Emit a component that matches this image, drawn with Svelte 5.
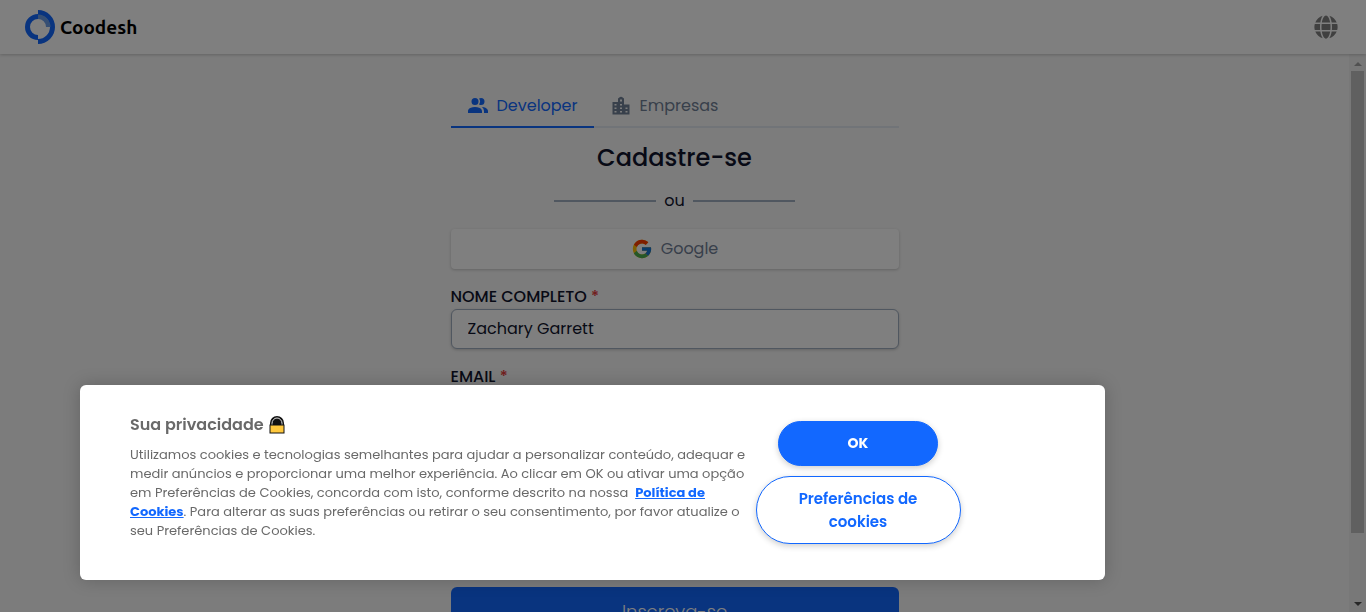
<script>
  let name = $state('Zachary Garrett');
  let email = $state('');
</script>

<div class="page">
  <header>
    <a class="brand" href="/" aria-label="Coodesh">
      <svg width="30" height="34" viewBox="0 0 30 34" aria-hidden="true">
        <path d="M13 4A13 13 0 0 0 13 30V25A8 8 0 0 1 13 9Z" fill="#1268ff" />
        <path d="M13 0A17 17 0 0 1 13 34V29A12 12 0 0 0 13 5Z" fill="#1268ff" />
        <path d="M13 4.500A12.500 12.500 0 0 1 25.500 17H21A8 8 0 0 0 13 9Z" fill="#6c9fe8" />
      </svg>
      <span>Coodesh</span>
    </a>
    <button class="globe" type="button" aria-label="Idioma">
      <svg width="24" height="24" viewBox="0 0 496 512" aria-hidden="true"><path fill="#808080" d="M336.5 160C322 70.7 287.8 8 248 8s-74 62.700-88.500 152h177zM152 256c0 22.200 1.200 43.500 3.300 64h185.300c2.100-20.500 3.300-41.800 3.300-64s-1.200-43.500-3.300-64H155.300c-2.100 20.500-3.300 41.800-3.300 64zm324.700-96c-28.600-67.900-86.500-120.400-158-141.600 24.400 33.800 41.200 84.700 50 141.600h108zM177.200 18.400C105.800 39.600 47.800 92.100 19.300 160h108c8.700-56.900 25.500-107.800 49.900-141.600zM487.400 192H372.700c2.100 21 3.300 42.500 3.300 64s-1.200 43-3.300 64h114.600c5.500-20.500 8.600-41.800 8.600-64s-3.100-43.500-8.500-64zM120 256c0-21.500 1.200-43 3.300-64H8.600C3.200 212.500 0 233.800 0 256s3.200 43.500 8.600 64h114.600c-2-21-3.200-42.500-3.200-64zm39.500 96c14.500 89.300 48.700 152 88.500 152s74-62.700 88.500-152h-177zm159.300 141.600c71.400-21.200 129.400-73.700 158-141.600h-108c-8.800 56.900-25.600 107.800-50 141.600zM19.300 352c28.600 67.900 86.500 120.400 158 141.600-24.400-33.800-41.200-84.700-50-141.600h-108z" /></svg>
    </button>
  </header>

  <div class="body">
    <main>
      <nav class="tabs">
        <a class="tab active" href="#developer">
          <svg width="24" height="24" viewBox="0 0 24 24" aria-hidden="true"><path fill="currentColor" d="M16 17V19H2V17S2 13 9 13 16 17 16 17M12.500 7.500A3.500 3.500 0 1 0 9 11A3.500 3.500 0 0 0 12.500 7.500M15.940 13A5.320 5.320 0 0 1 18 17V19H22V17S22 13.370 15.940 13M15 4A3.390 3.390 0 0 0 13.070 4.590A5 5 0 0 1 13.070 10.410A3.390 3.390 0 0 0 15 11A3.500 3.500 0 0 0 15 4Z" /></svg>
          Developer
        </a>
        <a class="tab" href="#empresas">
          <svg width="24" height="24" viewBox="0 0 24 24" aria-hidden="true"><path fill="currentColor" fill-rule="evenodd" d="M9 8V4.500L11 3Q12 2.300 13 3L15 4.500V10.500H20.500V20.500H3.500V8ZM11 5.500v2h2v-2ZM5.500 10v1.500h2V10ZM11 10v1.500h2V10ZM5.500 13.500v1.500h2V13.500ZM11 13.500v1.500h2V13.500ZM16.500 13.500v1.500h2V13.500ZM5.500 17v1.500h2v-1.500ZM11 17v1.500h2v-1.500ZM16.500 17v1.500h2v-1.500Z" /></svg>
          Empresas
        </a>
      </nav>

      <h1>Cadastre-se</h1>
      <div class="or"><span>ou</span></div>

      <button class="google" type="button">
        <svg width="22" height="22" viewBox="0 0 48 48" aria-hidden="true">
          <path fill="#FFC107" d="M43.600 20.100H42V20H24v8h11.300C33.700 32.700 29.200 36 24 36c-6.600 0-12-5.400-12-12s5.400-12 12-12c3.100 0 5.800 1.200 8 3l5.700-5.700C34 6.100 29.300 4 24 4 13 4 4 13 4 24s9 20 20 20 20-9 20-20c0-1.300-.1-2.700-.4-3.900z" />
          <path fill="#FF3D00" d="M6.300 14.700l6.600 4.800C14.700 15.100 19 12 24 12c3.100 0 5.800 1.200 8 3l5.700-5.700C34 6.100 29.300 4 24 4 16.300 4 9.700 8.300 6.300 14.700z" />
          <path fill="#4CAF50" d="M24 44c5.200 0 9.900-2 13.400-5.200l-6.200-5.200C29.200 35.100 26.700 36 24 36c-5.200 0-9.600-3.300-11.300-8l-6.500 5C9.500 39.600 16.200 44 24 44z" />
          <path fill="#1976D2" d="M43.600 20.100H42V20H24v8h11.300c-.8 2.200-2.200 4.200-4.100 5.600l6.200 5.200C37 39.200 44 34 44 24c0-1.300-.1-2.700-.4-3.900z" />
        </svg>
        Google
      </button>

      <form>
        <div class="field">
          <label for="name">NOME COMPLETO <em>*</em></label>
          <input id="name" type="text" bind:value={name} />
        </div>
        <div class="field">
          <label for="email">EMAIL <em>*</em></label>
          <input id="email" type="email" bind:value={email} />
        </div>
        <button class="submit" type="submit">Inscreva-se</button>
      </form>
    </main>
    <div class="scroll" aria-hidden="true">
      <i class="up"></i>
      <i class="thumb"></i>
      <i class="down"></i>
    </div>
  </div>
</div>

<div class="overlay"></div>

<section class="banner" aria-labelledby="privacy">
  <div class="copy">
    <h2 id="privacy">
      Sua privacidade
      <svg width="16" height="19" viewBox="0 0 16 19" aria-hidden="true">
        <path d="M1 9V7a7 7 0 0 1 14 0V9Z" fill="#111" />
        <path d="M3 9V7.500a5 5.500 0 0 1 10 0V9" fill="none" stroke="#ddd" />
        <rect x="1" y="9" width="14" height="8" fill="#ffc83d" stroke="#111" />
      </svg>
    </h2>
    <p>
      Utilizamos cookies e tecnologias semelhantes para ajudar a personalizar conteúdo, adequar e medir anúncios e proporcionar uma melhor experiência. Ao clicar em OK ou ativar uma opção em Preferências de Cookies, concorda com isto, conforme descrito na nossa &nbsp;<a href="#politica">Política de Cookies</a>. Para alterar as suas preferências ou retirar o seu consentimento, por favor atualize o seu Preferências de Cookies.
    </p>
  </div>
  <div class="actions">
    <button class="ok" type="button">OK</button>
    <button class="prefs" type="button">Preferências de cookies</button>
  </div>
</section>

<style>
  :global(body) {
    margin: 0;
    background: #f8f8f8;
  }
  .page,
  .banner,
  button,
  input {
    font-family: Poppins, Inter, sans-serif;
  }
  * {
    box-sizing: border-box;
  }
  svg {
    flex: none;
  }
  .page {
    display: flex;
    flex-direction: column;
    height: 100vh;
    overflow: hidden;
    color: #11142d;
    font-size: 16px;
    font-weight: 400;
  }
  header {
    display: flex;
    flex: none;
    align-items: center;
    justify-content: space-between;
    height: 54px;
    padding: 0 28px 0 25px;
    background: #fff;
    box-shadow: 0 1px 3px rgba(0, 0, 0, 0.2);
    z-index: 1;
  }
  .brand {
    display: flex;
    align-items: center;
    gap: 5px;
    color: #000;
    font: 700 19px Ubuntu, Roboto, sans-serif;
    text-decoration: none;
  }
  .globe {
    display: flex;
    padding: 0;
    border: 0;
    background: none;
  }
  .body {
    display: flex;
    flex: 1;
    min-height: 0;
  }
  main {
    width: 448px;
    margin: 0 auto;
    padding-top: 30px;
  }
  .tabs {
    display: flex;
    border-bottom: 2px solid #e2e8f0;
  }
  .tab {
    display: flex;
    align-items: center;
    gap: 7px;
    height: 44px;
    padding: 1px 16px 0 15px;
    margin-bottom: -2px;
    border-bottom: 2px solid transparent;
    color: #718096;
    text-decoration: none;
  }
  .tab.active {
    border-color: #1268ff;
    color: #1268ff;
  }
  h1 {
    margin: 12px 0 0;
    font-size: 24px;
    font-weight: 500;
    line-height: 36px;
    text-align: center;
  }
  .or {
    display: flex;
    align-items: center;
    gap: 8px;
    width: 241px;
    margin: 12px auto 16px;
    line-height: 25px;
  }
  .or::before,
  .or::after {
    content: '';
    flex: 1;
    height: 2px;
    background: #a0aec0;
  }
  .google {
    display: flex;
    align-items: center;
    justify-content: center;
    gap: 8px;
    width: 100%;
    height: 40px;
    padding-bottom: 2px;
    border: 0;
    border-radius: 4px;
    background: #fff;
    box-shadow: 0 1px 3px rgba(0, 0, 0, 0.2);
    color: #718096;
    font-size: 16px;
    font-weight: 400;
  }
  .field {
    display: flex;
    flex-direction: column;
    margin-top: 16px;
  }
  label {
    font-weight: 500;
    line-height: 24px;
  }
  em {
    color: #e53e3e;
    font-style: normal;
  }
  input {
    width: 100%;
    height: 40px;
    padding: 0 16px 2px;
    border: 1px solid #a0aec0;
    border-radius: 6px;
    background: #fff;
    box-shadow: 0 1px 3px rgba(0, 0, 0, 0.2);
    color: #11142d;
    font-size: 16px;
    font-weight: 400;
  }
  .submit {
    width: 100%;
    height: 48px;
    margin-top: 158px;
    border: 0;
    border-radius: 6px;
    background: #1268ff;
    color: #fff;
    font-size: 18px;
    font-weight: 300;
  }
  .scroll {
    display: flex;
    flex-direction: column;
    align-items: center;
    width: 17px;
    padding: 8px 2px 6px;
    background: #f1f1f1;
  }
  .up,
  .down {
    border: 4px solid transparent;
  }
  .up {
    border-top: 0;
    border-bottom-color: #a3a3a3;
  }
  .down {
    margin-top: auto;
    border-bottom: 0;
    border-top-color: #505050;
  }
  .thumb {
    width: 13px;
    height: 85%;
    margin-top: 5px;
    background: #c1c1c1;
  }
  .overlay {
    position: fixed;
    inset: 0;
    background: rgba(0, 0, 0, 0.5);
    z-index: 2;
  }
  .banner {
    position: fixed;
    bottom: 32px;
    left: 80px;
    display: flex;
    width: 75%;
    padding: 26px 144px 36px 50px;
    gap: 6px;
    border-radius: 6px;
    background: #fff;
    box-shadow: 0 0 18px rgba(0, 0, 0, 0.2);
    color: #696969;
    z-index: 3;
  }
  .copy {
    flex: 1;
  }
  h2 {
    display: flex;
    align-items: center;
    gap: 5px;
    margin: 0 0 6px;
    font-size: 16px;
    font-weight: 600;
    line-height: 28px;
  }
  p {
    margin: 0;
    font-size: 13px;
    font-weight: 400;
    line-height: 19px;
  }
  p a {
    color: #1268ff;
    font-weight: 700;
  }
  .actions {
    display: flex;
    flex-direction: column;
    align-items: center;
    gap: 10px;
    width: 205px;
    padding-top: 10px;
  }
  .actions button {
    border: 1px solid #1268ff;
    border-radius: 34px;
    box-shadow: 0 2px 6px rgba(0, 0, 0, 0.2);
    font-size: 15px;
    font-weight: 600;
    line-height: 23px;
  }
  .actions .ok {
    width: 160px;
    height: 45px;
    background: #1268ff;
    color: #fff;
    font-size: 14px;
    font-weight: 700;
  }
  .prefs {
    width: 100%;
    padding: 10px 30px;
    background: #fff;
    color: #1268ff;
  }
</style>
